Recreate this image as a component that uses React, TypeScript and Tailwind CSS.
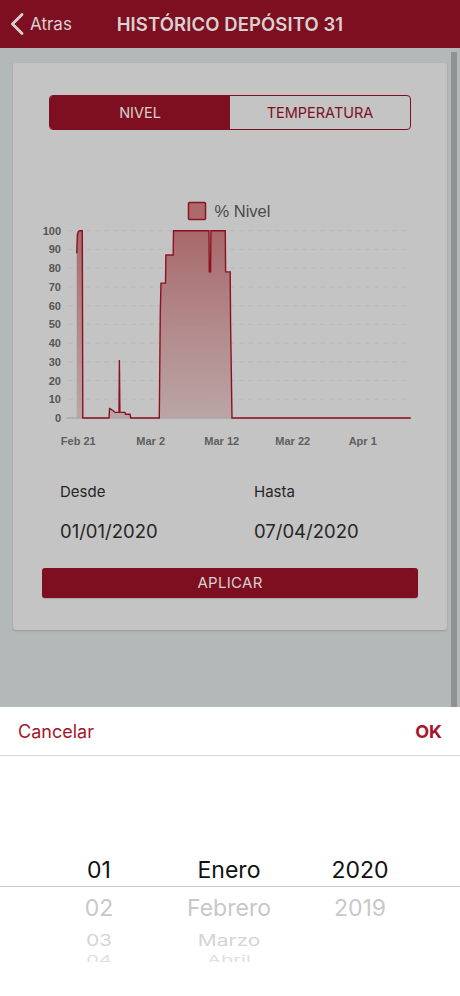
import React from "react";

// y(v) on the chart, page coordinates
const y = (v: number) => 418 - 1.873 * v;

const pts: [number, number][] = [
  [76.7, 88], [77.4, 98], [78.4, 99.5], [80, 100], [82.3, 100], [82.8, 0],
  [109, 0], [109.6, 5], [111.2, 4.6], [113, 4], [115, 3], [119, 3], [119.4, 31], [119.9, 3],
  [125, 3], [125.5, 2], [130, 2], [130.8, 0],
  [159.3, 0], [160.3, 57], [161, 72], [165.5, 72], [165.9, 87], [173.2, 87], [173.5, 100],
  [209, 100], [209.3, 78], [210.6, 78], [210.9, 100], [225.3, 100], [225.6, 78], [230.2, 78],
  [230.6, 50], [232, 0], [410.7, 0],
];

const line = pts.map(([x, v], i) => `${i ? "L" : "M"}${x} ${y(v).toFixed(1)}`).join(" ");
const area = `${line} L76.7 418 Z`;

function Chart() {
  const grid = [10, 20, 30, 40, 50, 60, 70, 80, 90, 100];
  const xs: [string, number][] = [["Feb 21", 78.3], ["Mar 2", 150.7], ["Mar 12", 221.7], ["Mar 22", 292.7], ["Apr 1", 362.7]];
  return (
    <svg className="ml-[17px] mt-[65px] block" width={400} height={255} viewBox="30 195 400 255">
      <defs>
        <linearGradient id="fillNivel" x1="0" y1="0" x2="0" y2="1">
          <stop offset="0" stopColor="#a55e60" stopOpacity={0.9} />
          <stop offset="1" stopColor="#b79a9b" stopOpacity={0.75} />
        </linearGradient>
      </defs>
      <rect x={188.5} y={202.5} width={17} height={17} rx={1} fill="#ad6a6b" stroke="#8e1322" strokeWidth={1.5} />
      <text x={214.5} y={216.5} fontSize={16.5} fill="#4a4a4a" fontFamily="'Liberation Sans', Arial, sans-serif">% Nivel</text>
      {grid.map((g) => (
        <line key={g} x1={68} x2={410} y1={y(g)} y2={y(g)} stroke="#b6b6b6" strokeWidth={1} strokeDasharray="5 4" opacity={0.7} />
      ))}
      {[0, ...grid].map((g) => (
        <text key={g} x={61} y={y(g) + 4} textAnchor="end" fontSize={11} fontWeight={600} fill="#555" fontFamily="'Liberation Sans', Arial, sans-serif">
          {g}
        </text>
      ))}
      <line x1={66.5} x2={411} y1={418} y2={418} stroke="#9a9a9a" strokeWidth={1} />
      <path d={area} fill="url(#fillNivel)" />
      <path d={line} fill="none" stroke="#8e1020" strokeWidth={1.4} strokeLinejoin="miter" />
      {xs.map(([t, x]) => (
        <text key={t} x={x} y={444.5} textAnchor="middle" fontSize={11} fontWeight={600} fill="#5e5e5e" fontFamily="'Liberation Sans', Arial, sans-serif">
          {t}
        </text>
      ))}
    </svg>
  );
}

export default function App() {
  return (
    <div className="w-[460px] h-[996px] overflow-hidden bg-[#b3b8b8] font-['Inter',sans-serif]">
      {/* nav bar */}
      <div className="grid h-12 grid-cols-[1fr_auto_1fr] items-center bg-[#7e0f20] text-[#d8d1d2]">
        <div className="flex items-center pl-[10px]">
          <svg width="14" height="22" viewBox="0 0 14 22" fill="none">
            <path d="M12 1.5 L2.5 11 L12 20.5" stroke="#d8d1d2" strokeWidth="2.8" strokeLinecap="round" strokeLinejoin="round" />
          </svg>
          <span className="ml-[6px] text-[17px] leading-none">Atras</span>
        </div>
        <div className="text-[18.5px] font-semibold leading-none tracking-[0.1px]">HISTÓRICO DEPÓSITO 31</div>
        <div />
      </div>

      {/* content */}
      <div className="relative h-[659px] pt-[15px]">
        <div className="mx-[13px] h-[567px] rounded-[3px] bg-[#c4c4c4] shadow-[0_1px_2px_rgba(0,0,0,0.18)]">
          <div className="pt-[32px] pl-[36px]">
            <div className="flex h-[35px] w-[362px] overflow-hidden rounded-[4px] border border-[#7e0f20] text-[14.5px]">
              <div className="flex flex-1 items-center justify-center bg-[#7e0f20] text-[#d8d1d2]">NIVEL</div>
              <div className="flex flex-1 items-center justify-center text-[#7e0f20]">TEMPERATURA</div>
            </div>
          </div>

          <Chart />

          <div className="mt-[33px] grid grid-cols-[194px_1fr] pl-[47px] text-[#262626]">
            <div>
              <div className="text-[15px] leading-[18px]">Desde</div>
              <div className="mt-[18px] text-[18.5px] leading-[24px]">01/01/2020</div>
            </div>
            <div>
              <div className="text-[15px] leading-[18px]">Hasta</div>
              <div className="mt-[18px] text-[18.5px] leading-[24px]">07/04/2020</div>
            </div>
          </div>

          <div className="mx-[29px] mt-[25px] flex h-[30px] items-center justify-center rounded-[3px] bg-[#7e0f20] pt-px text-[15px] tracking-[0.3px] text-[#d8d1d2] shadow-[0_1px_1px_rgba(0,0,0,0.15)]">
            APLICAR
          </div>
        </div>
        <div className="absolute right-[3px] top-[4px] bottom-0 w-[6px] bg-[#8e9292]" />
      </div>

      {/* date picker sheet */}
      <div className="h-[289px] bg-white">
        <div className="flex h-[49px] items-center justify-between border-b-[1.5px] border-[#d6d6d6] px-[18px] pt-px text-[18px] text-[#a5162b]">
          <span>Cancelar</span>
          <span className="font-bold">OK</span>
        </div>
        <div className="pt-[93px]">
          <div className="flex h-[37.5px] items-center border-b-[1.5px] border-[#c9c9c9] pt-[5px] text-[23px] text-[#111]">
            <div className="ml-[49px] w-[100px] text-center">01</div>
            <div className="ml-[15px] w-[130px] text-center">Enero</div>
            <div className="ml-[16px] w-[100px] text-center">2020</div>
          </div>
          <div className="flex h-[40px] items-center pt-[4px] text-[23px] text-[#c8c8c8]">
            <div className="ml-[49px] w-[100px] text-center">02</div>
            <div className="ml-[15px] w-[130px] text-center">Febrero</div>
            <div className="ml-[16px] w-[100px] text-center">2019</div>
          </div>
          <div className="flex h-[26px] items-center pt-[3px] text-[21px] text-[#d4d4d4]">
            <div className="ml-[49px] w-[100px] scale-y-[0.78] text-center">03</div>
            <div className="ml-[15px] w-[130px] scale-y-[0.78] text-center">Marzo</div>
          </div>
          <div className="flex h-[9px] overflow-hidden text-[20px] leading-none text-[#e0e0e0]">
            <div className="ml-[49px] mt-[1px] w-[100px] origin-top scale-y-[0.6] text-center">04</div>
            <div className="ml-[15px] mt-[1px] w-[130px] origin-top scale-y-[0.6] text-center">Abril</div>
          </div>
        </div>
      </div>
    </div>
  );
}
